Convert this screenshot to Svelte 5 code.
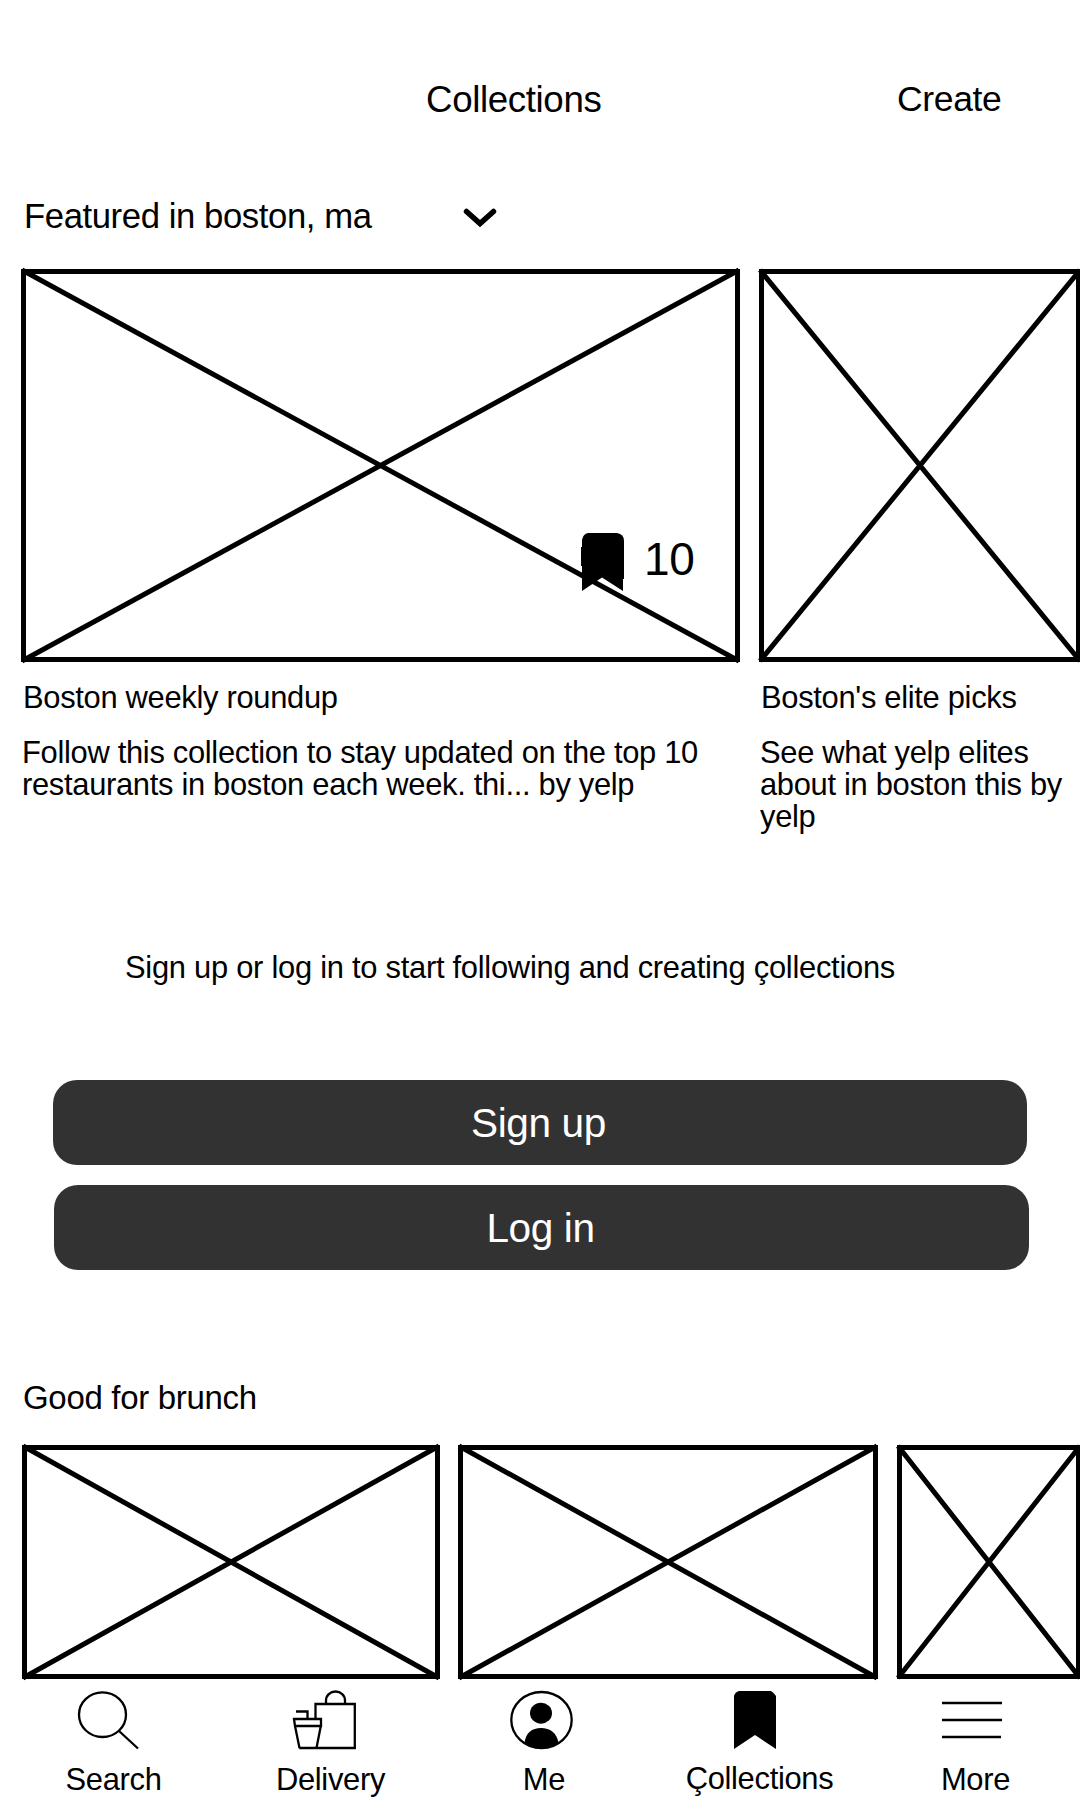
<script>
  const featured = [
    {
      title: 'Boston weekly roundup',
      lines: ['Follow this collection to stay updated on the top 10', 'restaurants in boston each week. thi... by yelp'],
      width: 719,
      saved: 10
    },
    {
      title: "Boston's elite picks",
      lines: ['See what yelp elites', 'about in boston this by', 'yelp'],
      width: 322
    }
  ];
  const brunch = [418, 420, 184];
  const tabs = ['Search', 'Delivery', 'Me', 'Çollections', 'More'];
</script>

{#snippet placeholder(w, h)}
  <svg class="placeholder" width={w} height={h} viewBox="0 0 {w} {h}">
    <rect x="2.5" y="2.5" width={w - 5} height={h - 5} />
    <path class="cross" d="M1 1L{w - 1} {h - 1}M{w - 1} 1L1 {h - 1}" />
  </svg>
{/snippet}

<main>
  <header>
    <span></span>
    <h1>Collections</h1>
    <button class="create">Create</button>
  </header>

  <button class="location">
    <span>Featured in boston, ma</span>
    <svg width="34" height="20" viewBox="0 0 34 20"><path d="M3.500 3.500L17 15.500L30.500 3.500" /></svg>
  </button>

  <section class="featured">
    {#each featured as card}
      <article>
        <div class="picture">
          {@render placeholder(card.width, 393)}
          {#if card.saved}
            <div class="saved">
              <svg width="43" height="58" viewBox="0 0 43 58">
                <path d="M7 0H36Q43 1 43 8V46H42V58L21 44.500L1 58V33H0V14H1V7Q2 1 7 0Z" />
              </svg>
              <span>{card.saved}</span>
            </div>
          {/if}
        </div>
        <h2>{card.title}</h2>
        <p>{#each card.lines as line}<span class="line">{line}</span>{/each}</p>
      </article>
    {/each}
  </section>

  <section class="account">
    <p>Sign up or log in to start following and creating çollections</p>
    <button class="signup">Sign up</button>
    <button class="login">Log in</button>
  </section>

  <section class="brunch">
    <h2>Good for brunch</h2>
    <div class="row">
      {#each brunch as width}
        <div class="thumb">{@render placeholder(width, 234)}</div>
      {/each}
    </div>
  </section>

  <nav>
    {#each tabs as tab, i}
      <a href="#{tab}">
        <svg class="icon" width="66" height="60" viewBox="0 0 66 60">
          {#if i === 0}
            <ellipse cx="27.500" cy="24.700" rx="23.500" ry="22.300" />
            <path d="M44 41L63 58.500" />
          {:else if i === 1}
            <path d="M24.500 29V14H63.800V58H8.200M35 13.500V10.500A9.500 9 0 0 1 54 10.500V13.500" />
            <path d="M5 21.500H16.500V29M3 29H30V36H4Z M4 36L8.500 58M29.800 36L25.500 58" />
          {:else if i === 2}
            <ellipse cx="34.500" cy="30" rx="30.200" ry="28" />
            <ellipse class="solid" cx="34" cy="23.200" rx="11" ry="10.500" />
            <path class="solid" d="M17.500 53C18.500 43 25 38 34 38S50 43 51.500 53Q35 63 17.500 53Z" />
          {:else if i === 3}
            <path class="solid" d="M16 1H48Q50.500 2.500 53 6V59L32 45L11 59V6Q12 2 16 1Z" />
          {:else}
            <path d="M3 13H63M3 30H63M3 47H62" />
          {/if}
        </svg>
        <span>{tab}</span>
      </a>
    {/each}
  </nav>
</main>

<style>
  :global(body) { background: #fff; overflow: hidden; }
  main {
    width: 1080px;
    height: 1800px;
    overflow: hidden;
    display: flex;
    flex-direction: column;
    color: #000;
    font-family: "Liberation Sans", Arial, sans-serif;
    font-size: 30.9px;
    letter-spacing: -0.01em;
    line-height: 32px;
  }
  h1, h2, p { margin: 0; font-weight: 400; font-size: inherit; }
  button { border: 0; padding: 0; background: none; color: inherit; font: inherit; letter-spacing: -0.01em; text-align: left; }
  svg { display: block; flex: none; }

  header {
    display: grid;
    grid-template-columns: 426px 471px 1fr;
    height: 196px;
    padding-top: 80px;
    box-sizing: border-box;
    line-height: 40px;
  }
  h1 { font-size: 36.7px; letter-spacing: -0.01em; }
  .create { font-size: 35.5px; line-height: 38px; align-self: start; }

  .location {
    display: flex;
    align-items: center;
    gap: 91px;
    height: 40px;
    padding-left: 24px;
    font-size: 34.7px;
    letter-spacing: -0.012em;
    line-height: 40px;
  }
  .location svg { margin-top: 4px; }
  .location path { fill: none; stroke: #000; stroke-width: 5.5; stroke-linecap: round; }

  .placeholder { overflow: visible; fill: none; stroke: #000; stroke-width: 5; }
  .cross { stroke-width: 5; }

  .featured { display: flex; gap: 19px; height: 589px; margin-top: 33px; padding-left: 21px; }
  article { flex: none; }
  .picture { position: relative; }
  .saved {
    position: absolute;
    left: 560px;
    top: 264px;
    display: flex;
    gap: 20px;
    font-size: 46px;
    line-height: 53px;
  }
  article h2 { margin-top: 20px; padding-left: 2px; }
  article p { margin-top: 23px; padding-left: 1px; }
  .line { display: block; white-space: nowrap; }

  .account { display: flex; flex-direction: column; height: 412px; box-sizing: border-box; padding: 94px 51px 0 53px; }
  .account p { padding-left: 72px; margin-bottom: 96px; letter-spacing: -0.27px; }
  .account button {
    height: 85px;
    border-radius: 24px;
    background: #323232;
    color: #fff;
    font-size: 40.6px;
    letter-spacing: -0.01em;
    text-align: center;
  }
  .account .signup { margin-right: 2px; padding-right: 3px; }
  .account .login { margin: 20px 0 0 1px; padding-right: 2px; }

  .brunch { padding: 110px 0 0 22px; }
  .brunch h2 { padding-left: 1px; font-size: 33px; line-height: 36px; }
  .row { display: flex; gap: 18px; margin-top: 29px; }
  .thumb { flex: none; }
  .thumb:last-child { margin-left: 1px; }

  nav { display: grid; grid-template-columns: repeat(5, 216px); margin-top: 11px; }
  nav a { display: flex; flex-direction: column; align-items: center; color: inherit; text-decoration: none; }
  nav span { margin-top: 14px; padding-left: 11px; }
  nav a:nth-child(2) span { padding-left: 13px; }
  nav a:nth-child(3) span { padding-left: 8px; }
  nav a:nth-child(4) span { margin-top: 13px; padding-left: 7px; }
  nav a:nth-child(5) span { padding-left: 7px; }
  .icon { fill: none; stroke: #000; stroke-width: 2.3; }
  .solid { fill: #000; stroke: none; }
</style>
